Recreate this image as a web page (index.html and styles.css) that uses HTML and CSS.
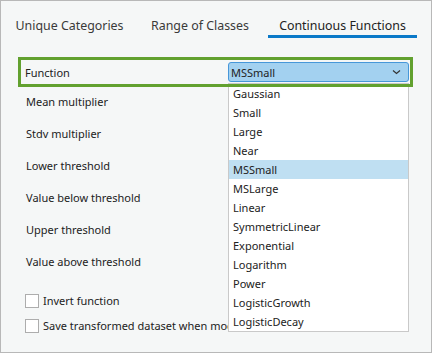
FILE: index.html
```html
<!DOCTYPE html>
<html>
<head>
<meta charset="utf-8">
<link rel="stylesheet" href="styles.css">
</head>
<body>
<div class="panel">
  <div class="tabs">
    <div class="tab tab-1">Unique Categories</div>
    <div class="tab tab-2">Range of Classes</div>
    <div class="tab tab-3 active">Continuous Functions</div>
  </div>
  <div class="form">
    <div class="func-row">
      <span class="label">Function</span>
      <div class="select">
        <span>MSSmall</span>
        <svg class="chev" width="9" height="6" viewBox="0 0 9 6"><path d="M1 1.5 L4.5 4.5 L8 1.5" fill="none" stroke="#333" stroke-width="1.2"/></svg>
      </div>
    </div>
    <div class="rows">
      <div class="row"><span class="label">Mean multiplier</span></div>
      <div class="row"><span class="label">Stdv multiplier</span></div>
      <div class="row"><span class="label">Lower threshold</span></div>
      <div class="row"><span class="label">Value below threshold</span></div>
      <div class="row"><span class="label">Upper threshold</span></div>
      <div class="row"><span class="label">Value above threshold</span></div>
    </div>
    <div class="check-row first"><span class="box"></span><span class="label">Invert function</span></div>
    <div class="check-row"><span class="box"></span><span class="label clip">Save transformed dataset when modeling</span></div>
    <ul class="list">
      <li>Gaussian</li>
      <li>Small</li>
      <li>Large</li>
      <li>Near</li>
      <li class="sel">MSSmall</li>
      <li>MSLarge</li>
      <li>Linear</li>
      <li>SymmetricLinear</li>
      <li>Exponential</li>
      <li>Logarithm</li>
      <li>Power</li>
      <li>LogisticGrowth</li>
      <li>LogisticDecay</li>
    </ul>
  </div>
</div>
</body>
</html>
```
FILE: styles.css
```css
html, body {
  margin: 0;
  padding: 0;
}
body {
  font-family: "Noto Sans", "Liberation Sans", sans-serif;
  color: #222;
}
.panel {
  width: 430px;
  height: 351px;
  border: 1px solid #b8b8b8;
  background: #f5f7f7;
  position: relative;
  overflow: hidden;
}
.tabs {
  display: flex;
  padding-left: 7px;
  padding-top: 16px;
  height: 21px;
}
.tab {
  font-size: 12.4px;
  color: #3a3a3a;
  text-align: center;
  white-space: nowrap;
  height: 18px;
  line-height: 18px;
  border-bottom: 3px solid transparent;
}
.tab-1 { width: 123px; }
.tab-2 { width: 116px; margin-left: 11px; }
.tab-3 { width: 149px; margin-left: 10px; }
.tab.active {
  color: #222;
  border-bottom-color: #0a79c8;
}
.form {
  padding-top: 19px;
}
.func-row {
  position: relative;
  z-index: 2;
  margin-left: 17px;
  width: 384px;
  height: 24px;
  border: 3px solid #62a12f;
  display: flex;
  align-items: center;
  justify-content: space-between;
  padding: 0 1px 0 4px;
}
.label {
  font-size: 11px;
  white-space: nowrap;
}
.label.clip {
  display: block;
  width: 185px;
  overflow: hidden;
}
.select {
  box-sizing: border-box;
  width: 181px;
  height: 20px;
  background: #a3d1f0;
  border: 1px solid #4797d9;
  border-radius: 3px;
  display: flex;
  align-items: center;
  justify-content: space-between;
  padding: 0 7px 0 2px;
  font-size: 11px;
}
.chev {
  display: block;
}
.rows {
  margin-top: -2px;
}
.row {
  height: 32px;
  display: flex;
  align-items: center;
  padding-left: 25px;
}
.check-row {
  height: 25px;
  display: flex;
  align-items: center;
  padding-left: 24px;
}
.check-row.first {
  margin-top: 11px;
}
.box {
  box-sizing: border-box;
  width: 14px;
  height: 14px;
  border: 1px solid #adadad;
  background: #fff;
  margin-right: 4px;
  flex: none;
}
.list {
  position: absolute;
  z-index: 1;
  left: 227px;
  top: 82px;
  width: 179px;
  margin: 0;
  padding: 0;
  list-style: none;
  background: #fff;
  border: 1px solid #c9c9c9;
}
.list li {
  height: 19px;
  line-height: 19px;
  padding-left: 4px;
  font-size: 11px;
  white-space: nowrap;
}
.list li.sel {
  background: #bfdff2;
}
```
